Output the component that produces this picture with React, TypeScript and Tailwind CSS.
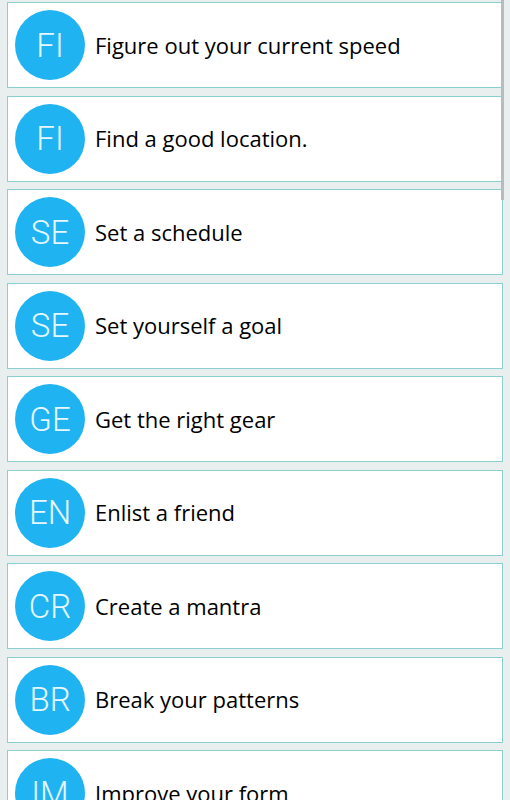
import React from 'react';

const items = [
  'Figure out your current speed',
  'Find a good location.',
  'Set a schedule',
  'Set yourself a goal',
  'Get the right gear',
  'Enlist a friend',
  'Create a mantra',
  'Break your patterns',
  'Improve your form',
];

const TipRow: React.FC<{ title: string }> = ({ title }) => {
  const initials = title.slice(0, 2).toUpperCase();
  return (
    <div className="h-[86px] shrink-0 bg-white border border-[#8ccfd0] flex items-center pl-[7px] gap-[10px]">
      <div className="w-[70px] h-[70px] rounded-full bg-[#1fb4f1] flex items-center justify-center shrink-0">
        <span className="text-[#e6f7ff] text-[33px] font-light font-['Roboto',sans-serif] leading-none">{initials}</span>
      </div>
      <span className="text-[22px] text-black font-['Open_Sans',sans-serif]">{title}</span>
    </div>
  );
};

export default function App() {
  return (
    <div className="relative w-[510px] h-[800px] overflow-hidden bg-[#e9eeee]">
      <div className="flex flex-col gap-[7.5px] pt-[2px] pl-[7px] pr-[7px]">
        {items.map((t, i) => (
          <TipRow key={i} title={t} />
        ))}
      </div>
      {/* scrollbar thumb */}
      <div className="absolute top-0 right-[6px] w-[3px] h-[200px] bg-[#b9bcbc]" />
    </div>
  );
}
